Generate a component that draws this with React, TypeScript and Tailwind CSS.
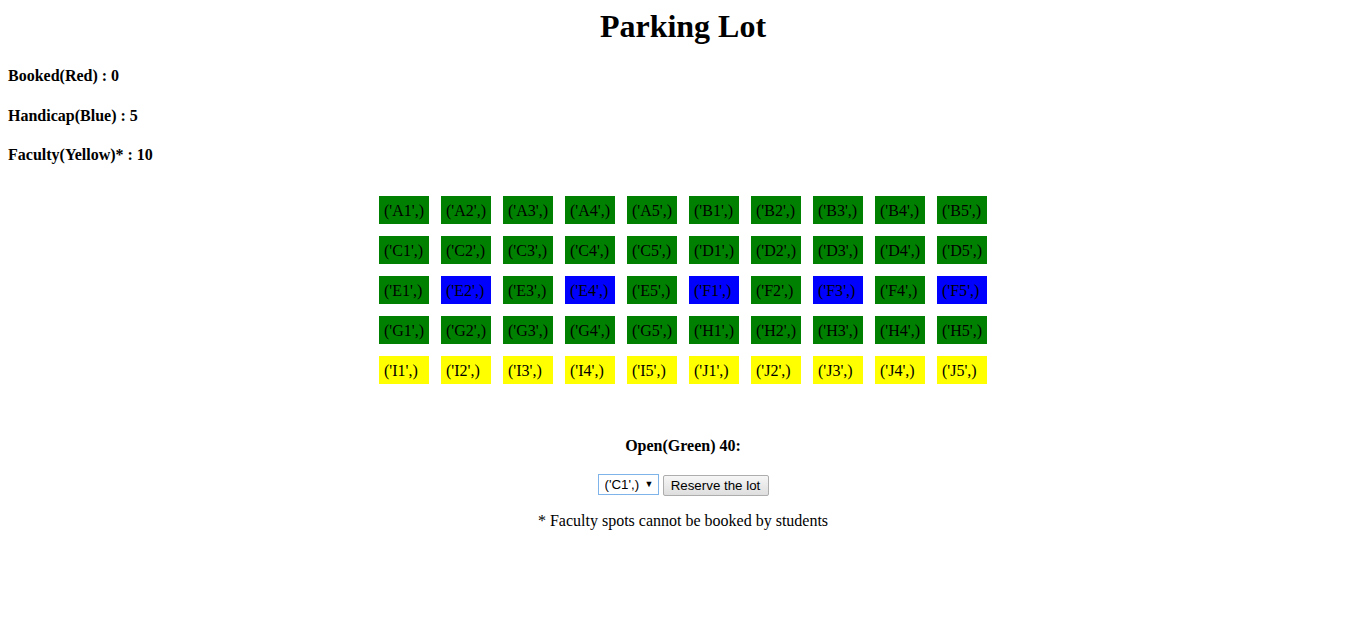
import { useState } from "react"

type Spot = { name: string; kind: "open" | "handicap" | "faculty" | "booked" }

const rows = [
  ["A1", "A2", "A3", "A4", "A5", "B1", "B2", "B3", "B4", "B5"],
  ["C1", "C2", "C3", "C4", "C5", "D1", "D2", "D3", "D4", "D5"],
  ["E1", "E2", "E3", "E4", "E5", "F1", "F2", "F3", "F4", "F5"],
  ["G1", "G2", "G3", "G4", "G5", "H1", "H2", "H3", "H4", "H5"],
  ["I1", "I2", "I3", "I4", "I5", "J1", "J2", "J3", "J4", "J5"],
]

const handicap = ["E2", "E4", "F1", "F3", "F5"]

const spots: Spot[] = rows.flat().map((name) => ({
  name,
  kind: handicap.includes(name) ? "handicap" : name[0] === "I" || name[0] === "J" ? "faculty" : "open",
}))

const colors = {
  open: "bg-[#008000]",
  handicap: "bg-[#0000ff]",
  faculty: "bg-[#ffff00]",
  booked: "bg-[#ff0000]",
}

export default function App() {
  const [picked, setPicked] = useState("C1")
  const open = spots.filter((s) => s.kind === "open")

  return (
    <div className="min-h-screen bg-white pt-2 pl-2 pr-[6px] font-['Liberation_Serif',serif] text-black">
      <h1 className="text-center text-[32px] font-bold leading-[37px]">Parking Lot</h1>

      <h4 className="mt-[21px] text-base font-bold leading-[19px]">Booked(Red) : 0</h4>
      <h4 className="mt-[21px] text-base font-bold leading-[19px]">Handicap(Blue) : 5</h4>
      <h4 className="mt-[20px] text-base font-bold leading-[19px]">Faculty(Yellow)* : 10</h4>

      <div className="mt-[32px] grid grid-cols-[repeat(10,50px)] justify-center gap-3">
        {spots.map((s) => (
          <div key={s.name} className={`flex h-[28px] w-[50px] items-center pl-[5px] text-base leading-[19px] whitespace-nowrap ${colors[s.kind]}`}>
            ('{s.name}',)
          </div>
        ))}
      </div>

      <h4 className="mt-[52px] text-center text-base font-bold leading-[19px]">Open(Green) {open.length + 5}:</h4>

      <div className="mt-[19px] flex items-start justify-center gap-1 font-['Liberation_Sans',sans-serif] text-[13.33px]">
        <div className="relative">
          <select
            value={picked}
            onChange={(e) => setPicked(e.target.value)}
            className="h-[21px] w-[61px] appearance-none border border-[#7eb4ea] bg-white pl-[6px] leading-[17px] outline-none"
          >
            {open.map((s) => (
              <option key={s.name} value={s.name}>('{s.name}',)</option>
            ))}
          </select>
          <span className="pointer-events-none absolute right-[5px] top-[4px] text-[9px] leading-[12px]">▼</span>
        </div>
        <button className="mt-[1px] h-[21px] w-[106px] rounded-[2px] border border-[#adadad] bg-gradient-to-b from-[#f6f6f6] to-[#dedede] leading-[17px]">
          Reserve the lot
        </button>
      </div>

      <p className="mt-[15px] text-center text-base leading-[19px]">* Faculty spots cannot be booked by students</p>
    </div>
  )
}
